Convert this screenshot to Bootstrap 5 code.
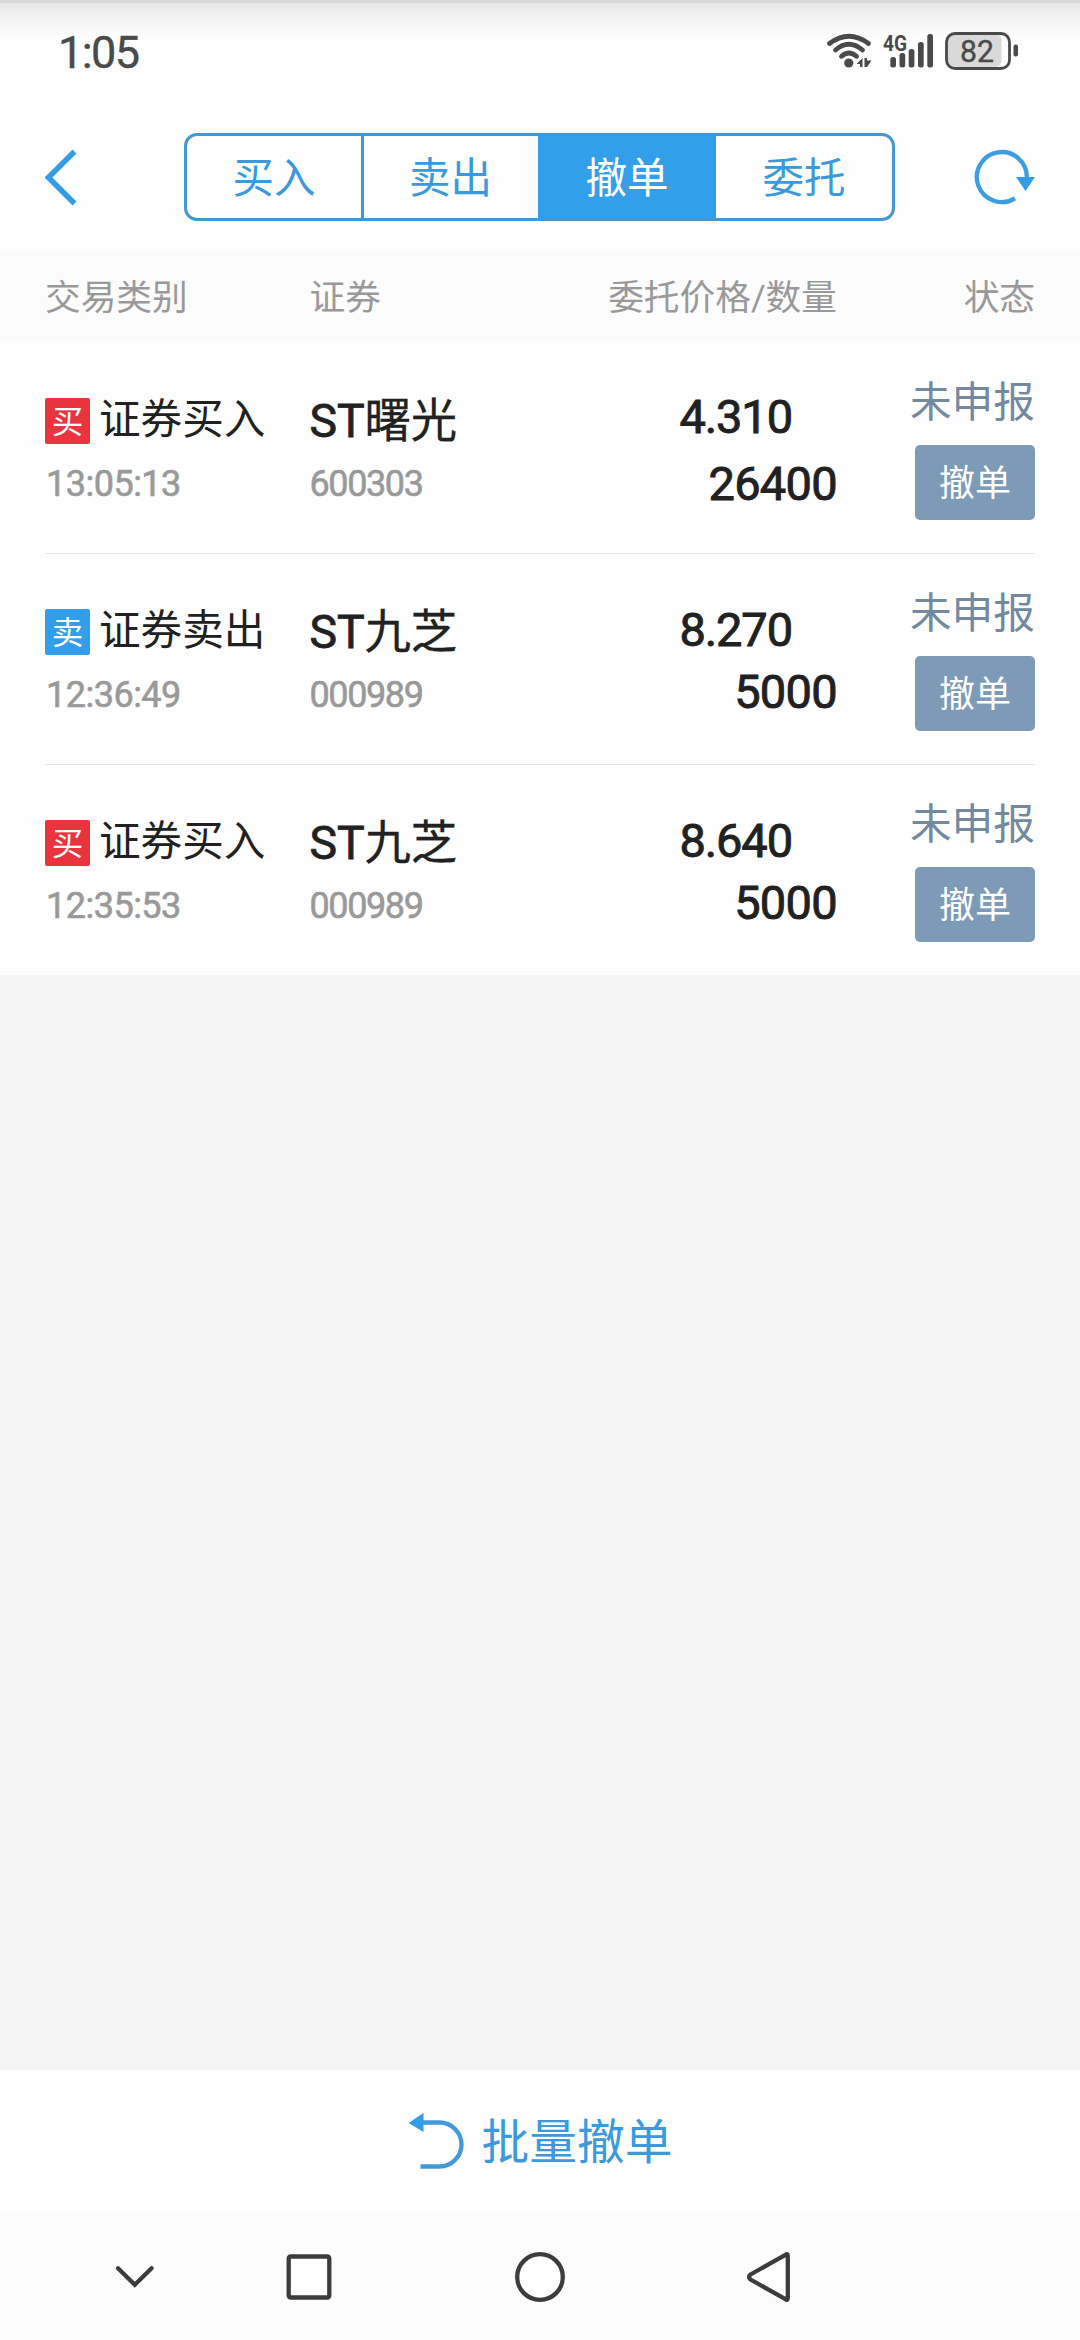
<!DOCTYPE html>
<html lang="zh-CN">
<head>
<meta charset="utf-8">
<meta name="viewport" content="width=device-width, initial-scale=1">
<title>撤单</title>
<link href="https://cdn.jsdelivr.net/npm/bootstrap@5.3.0/dist/css/bootstrap.min.css" rel="stylesheet">
<style>
:root{--blue:#329de6;--ink:#212121;--muted2:#999}
html,body{height:100%}
body{font-family:Roboto,"Noto Sans CJK SC",sans-serif;color:var(--ink);background:#f5f5f5;line-height:1}
.screen{width:1080px;height:2340px;overflow:hidden}
.statusbar{height:100px;padding:0 60px 0 58px;background:linear-gradient(#d8d8d8 0 3px,#e6e6e6 3px,#f3f3f3 18px,#fefefe 38px)}
.clock{font-size:45px;line-height:105px;color:#4a4a4a;letter-spacing:-1.6px;-webkit-text-stroke:.4px}
.topbar{height:152px;padding:33px 45px 0;background:#fefefe}
.tabs{width:711px;height:88px;border:3px solid #4598d4;border-radius:13px;overflow:hidden}
.tabs .btn{flex:0 0 177px;width:177px;border:0;border-radius:0;border-left:3px solid #4598d4;color:#3b99dc;font-size:41.5px;line-height:86px;padding:0 1px 0 0}
.tabs .btn:first-child{flex-basis:174px;width:174px;border-left:0;padding:0}
.tabs .btn.active{flex-basis:178px;width:178px;background:#329fea;color:#fff;border-color:#329fea;padding-right:3px}
.tabs .btn.active+.btn{flex:1 1 0;border-left:0;padding:0}
.heads{height:90px;padding:0 45px;background:#fcfcfc;color:var(--muted2);font-size:35.7px;line-height:92px}
.c-kind{width:265px}.c-name{width:240px}.c-num{width:287px}.c-state{width:198px}
.c-name{margin-left:-.5px;margin-right:.5px}
.orders{background:#fefefe;padding:0 45px}
.order{height:211px;border-top:1px solid transparent}
.order+.order{border-top-color:#e6e6e6}
.kind-line{height:48px;margin-top:54px;font-size:41.6px;line-height:46px}
.kind-line .label{padding-bottom:2px}
.tag{width:45px;height:46px;border-radius:2px;color:#fff;font-size:31.5px;line-height:49px;text-align:center;margin-right:9px}
.tag-buy{background:#e9343d}.tag-sell{background:#329de8}
.time,.code{color:var(--muted2);font-size:36px;line-height:42px;-webkit-text-stroke:.6px}
.time{margin-top:18px;letter-spacing:-.5px;padding-left:1px}
.code{margin-top:17px;letter-spacing:-1.4px}
.stock{margin-top:53px;font-size:46.4px;line-height:50px;-webkit-text-stroke:.8px;letter-spacing:-.1px}
.stock span{-webkit-text-stroke:.3px}
.price,.qty{font-size:47px;line-height:50px;-webkit-text-stroke:.9px;letter-spacing:-.7px}
.price{margin-top:49px;padding-right:45px;letter-spacing:-1.1px}
.qty{margin-top:17px}
.order+.order .price{margin-top:51px}
.order+.order .qty{margin-top:12px}
.state{margin-top:36px;font-size:41.7px;line-height:47px;color:#72899f}
.cancel{width:120px;height:75px;margin-top:19px;border:0;border-radius:5px;background:#7d9ab7;color:#fff;font-size:36px;line-height:78px;padding:0}
.cancel:hover{background:#7d9ab7;color:#fff}
.batch{height:144px;background:#fefefe;color:#3b99dc;font-size:47.7px;padding-top:2px}
.batch svg{margin-bottom:4px}
.batch span{padding-top:2px}
.sysnav{height:126px;background:#fcfcfc}
svg{display:block;flex:none}
</style>
</head>
<body>
<main class="screen d-flex flex-column">
  <header class="statusbar d-flex justify-content-between">
    <span class="clock">1:05</span>
    <svg width="200" height="100" viewBox="820 0 200 100" fill="#4a4a4a">
      <g fill="none" stroke="#4a4a4a" stroke-width="4.800" stroke-linecap="round">
        <path d="M829.500 43.500Q848.800 29 868.500 43.500"/><path d="M835.500 50Q848.800 38.500 862.500 50"/><path d="M841.500 56.300Q848.800 49.500 856.500 56.300"/>
      </g>
      <circle cx="848.800" cy="63" r="4.600"/>
      <path d="M856.500 64l6-6v9h-2.500v-3zM864.500 58h2.500v2.500h4.500l-4.500 6.500h-2.500z"/>
      <text x="883" y="50.500" font-size="22" font-weight="700" textLength="24" lengthAdjust="spacingAndGlyphs">4G</text>
      <rect x="890.300" y="57" width="5.700" height="10.500" rx="2.500"/><rect x="899.500" y="53" width="5.700" height="14.500" rx="2.500"/><rect x="908.700" y="49" width="5.700" height="18.500" rx="2.500"/><rect x="918" y="42" width="5.700" height="25.500" rx="2.500"/><rect x="927.300" y="34" width="5.700" height="33.500" rx="2.500"/>
      <rect x="947" y="34" width="54.500" height="33" rx="6" fill="#d9d9d9"/>
      <rect x="946.500" y="33.500" width="63" height="35" rx="8.500" fill="none" stroke="#4a4a4a" stroke-width="2.800"/>
      <rect x="1013.500" y="44.500" width="4.500" height="12" rx="2"/>
      <text x="960" y="62" font-size="32" stroke="#4a4a4a" stroke-width=".4" textLength="34" lengthAdjust="spacingAndGlyphs">82</text>
    </svg>
  </header>

  <nav class="topbar d-flex justify-content-between">
    <svg width="139" height="88" viewBox="45 133 139 88" fill="none" stroke="#329de6" stroke-width="5.500"><path d="M74.500 151.500L48.500 177.500l26 26" stroke-linejoin="miter"/></svg>
    <div class="tabs d-flex">
      <button class="btn">买入</button><button class="btn">卖出</button><button class="btn active">撤单</button><button class="btn">委托</button>
    </div>
    <svg width="140" height="88" viewBox="895 133 140 88"><path d="M1015 198.300A25 25 0 1 1 1026.800 178" fill="none" stroke="#3b9de2" stroke-width="4.300"/><path d="M1016 177h19l-9.500 14z" fill="#329de6"/></svg>
  </nav>

  <div class="heads d-flex">
    <span class="c-kind">交易类别</span><span class="c-name">证券</span><span class="c-num text-end">委托价格/数量</span><span class="c-state text-end">状态</span>
  </div>

  <section class="orders">
    <article class="order d-flex">
      <div class="c-kind"><div class="kind-line d-flex align-items-center"><span class="tag tag-buy">买</span><span class="label">证券买入</span></div><div class="time">13:05:13</div></div>
      <div class="c-name"><div class="stock">ST<span>曙光</span></div><div class="code">600303</div></div>
      <div class="c-num text-end"><div class="price">4.310</div><div class="qty">26400</div></div>
      <div class="c-state d-flex flex-column align-items-end"><div class="state">未申报</div><button class="btn cancel">撤单</button></div>
    </article>
    <article class="order d-flex">
      <div class="c-kind"><div class="kind-line d-flex align-items-center"><span class="tag tag-sell">卖</span><span class="label">证券卖出</span></div><div class="time">12:36:49</div></div>
      <div class="c-name"><div class="stock">ST<span>九芝</span></div><div class="code">000989</div></div>
      <div class="c-num text-end"><div class="price">8.270</div><div class="qty">5000</div></div>
      <div class="c-state d-flex flex-column align-items-end"><div class="state">未申报</div><button class="btn cancel">撤单</button></div>
    </article>
    <article class="order d-flex">
      <div class="c-kind"><div class="kind-line d-flex align-items-center"><span class="tag tag-buy">买</span><span class="label">证券买入</span></div><div class="time">12:35:53</div></div>
      <div class="c-name"><div class="stock">ST<span>九芝</span></div><div class="code">000989</div></div>
      <div class="c-num text-end"><div class="price">8.640</div><div class="qty">5000</div></div>
      <div class="c-state d-flex flex-column align-items-end"><div class="state">未申报</div><button class="btn cancel">撤单</button></div>
    </article>
  </section>

  <footer class="mt-auto">
    <div class="batch d-flex align-items-center justify-content-center">
      <svg width="74" height="60" viewBox="407 2111 74 60"><path d="M420 2122.500H438.500A22 22 0 0 1 438.500 2166.500H419.500" fill="none" stroke="#4099da" stroke-width="4.300"/><path d="M407.500 2123l15-10v19z" fill="#329de6"/></svg>
      <span>批量撤单</span>
    </div>
    <div class="sysnav">
      <svg width="1080" height="126" viewBox="0 2214 1080 126" fill="#fff" stroke="#3c3c3c" stroke-width="4.300" stroke-linejoin="round" stroke-linecap="round">
        <path d="M118 2268.300l16.800 16.500 16.800-16.500" fill="none" stroke-linejoin="miter"/>
        <rect x="288.700" y="2256.500" width="40.600" height="41" rx="2"/>
        <circle cx="540" cy="2277" r="22.800"/>
        <path d="M785.500 2254.800Q787.800 2253 787.800 2256V2298Q787.800 2301 785.500 2299.200L750.500 2279.500Q747.500 2277 750.500 2274.500Z"/>
      </svg>
    </div>
  </footer>
</main>
<script src="https://cdn.jsdelivr.net/npm/bootstrap@5.3.0/dist/js/bootstrap.bundle.min.js"></script>
</body>
</html>
